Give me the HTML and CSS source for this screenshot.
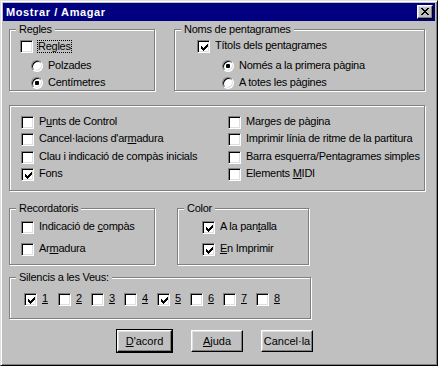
FILE: index.html
```html
<!DOCTYPE html>
<html lang="ca">
<head>
  <meta charset="utf-8">
  <title>Mostrar / Amagar</title>
  <link rel="stylesheet" href="styles.css">
</head>
<body>
<div class="window">
  <div class="titlebar">
    <span class="title">Mostrar / Amagar</span>
    <button class="close" aria-label="Tancar">
      <svg width="8" height="7" viewBox="0 0 8 7"><path d="M0 0h2v1H0zM6 0h2v1H6zM1 1h2v1H1zM5 1h2v1H5zM2 2h4v1H2zM3 3h2v1H3zM2 4h4v1H2zM1 5h2v1H1zM5 5h2v1H5zM0 6h2v1H0zM6 6h2v1H6z"/></svg>
    </button>
  </div>

  <div class="client">
    <div class="row top-row">
      <div class="group regles">
        <span class="legend">Regles</span>
        <div class="opt"><span class="check"></span><span class="text focus">Regles</span></div>
        <div class="radios">
          <div class="opt radio-opt"><span class="radio"></span><span class="text">Polzades</span></div>
          <div class="opt radio-opt"><span class="radio on"></span><span class="text">Centímetres</span></div>
        </div>
      </div>
      <div class="group noms">
        <span class="legend">Noms de pentagrames</span>
        <div class="opt"><span class="check on"><svg width="7" height="7" viewBox="0 0 7 7"><path d="M0 2h1v1h1v1h1v-1h1v-1h1v-1h1v-1h1v3h-1v1h-1v1h-1v1h-1v1h-1v-1h-1v-1h-1z"/></svg></span><span class="text">Títols dels <u>p</u>entagrames</span></div>
        <div class="radios">
          <div class="opt radio-opt"><span class="radio on"></span><span class="text">Només a la primera pàgina</span></div>
          <div class="opt radio-opt"><span class="radio"></span><span class="text">A totes les pàgines</span></div>
        </div>
      </div>
    </div>

    <div class="group mid">
      <div class="col col-left">
        <div class="opt"><span class="check"></span><span class="text">P<u>u</u>nts de Control</span></div>
        <div class="opt"><span class="check"></span><span class="text">Cancel·lacions d'ar<u>m</u>adura</span></div>
        <div class="opt"><span class="check"></span><span class="text">Clau i indicació de compàs inicials</span></div>
        <div class="opt"><span class="check on"><svg width="7" height="7" viewBox="0 0 7 7"><path d="M0 2h1v1h1v1h1v-1h1v-1h1v-1h1v-1h1v3h-1v1h-1v1h-1v1h-1v1h-1v-1h-1v-1h-1z"/></svg></span><span class="text">Fons</span></div>
      </div>
      <div class="col">
        <div class="opt"><span class="check"></span><span class="text">Marges de pàgina</span></div>
        <div class="opt"><span class="check"></span><span class="text">Imprimir línia de ritme de la partitura</span></div>
        <div class="opt"><span class="check"></span><span class="text">Barra esquerra/Pentagrames simples</span></div>
        <div class="opt"><span class="check"></span><span class="text">Elements <u>M</u>IDI</span></div>
      </div>
    </div>

    <div class="row third-row">
      <div class="group record">
        <span class="legend">Recordatoris</span>
        <div class="opt"><span class="check"></span><span class="text">Indicació de <u>c</u>ompàs</span></div>
        <div class="opt"><span class="check"></span><span class="text">Ar<u>m</u>adura</span></div>
      </div>
      <div class="group color">
        <span class="legend">Color</span>
        <div class="opt"><span class="check on"><svg width="7" height="7" viewBox="0 0 7 7"><path d="M0 2h1v1h1v1h1v-1h1v-1h1v-1h1v-1h1v3h-1v1h-1v1h-1v1h-1v1h-1v-1h-1v-1h-1z"/></svg></span><span class="text">A la pan<u>t</u>alla</span></div>
        <div class="opt"><span class="check on"><svg width="7" height="7" viewBox="0 0 7 7"><path d="M0 2h1v1h1v1h1v-1h1v-1h1v-1h1v-1h1v3h-1v1h-1v1h-1v1h-1v1h-1v-1h-1v-1h-1z"/></svg></span><span class="text"><u>E</u>n Imprimir</span></div>
      </div>
    </div>

    <div class="group silencis">
      <span class="legend">Silencis a les Veus:</span>
      <div class="opt voice"><span class="check on"><svg width="7" height="7" viewBox="0 0 7 7"><path d="M0 2h1v1h1v1h1v-1h1v-1h1v-1h1v-1h1v3h-1v1h-1v1h-1v1h-1v1h-1v-1h-1v-1h-1z"/></svg></span><span class="text"><u>1</u></span></div>
      <div class="opt voice"><span class="check"></span><span class="text"><u>2</u></span></div>
      <div class="opt voice"><span class="check"></span><span class="text"><u>3</u></span></div>
      <div class="opt voice"><span class="check"></span><span class="text"><u>4</u></span></div>
      <div class="opt voice"><span class="check on"><svg width="7" height="7" viewBox="0 0 7 7"><path d="M0 2h1v1h1v1h1v-1h1v-1h1v-1h1v-1h1v3h-1v1h-1v1h-1v1h-1v1h-1v-1h-1v-1h-1z"/></svg></span><span class="text"><u>5</u></span></div>
      <div class="opt voice"><span class="check"></span><span class="text"><u>6</u></span></div>
      <div class="opt voice"><span class="check"></span><span class="text"><u>7</u></span></div>
      <div class="opt voice"><span class="check"></span><span class="text"><u>8</u></span></div>
    </div>

    <div class="buttons">
      <button class="btn default"><u>D</u>'acord</button>
      <button class="btn"><u>A</u>juda</button>
      <button class="btn">Cancel·la</button>
    </div>
  </div>
</div>
</body>
</html>
```

FILE: styles.css
```css
* { box-sizing: border-box; }

body {
  margin: 0;
  font-family: "Liberation Sans", Arial, sans-serif;
  font-size: 11px;
  line-height: 13px;
  letter-spacing: -0.25px;
  color: #000;
  background: #c0c0c0;
}

.window {
  width: 438px;
  height: 366px;
  padding: 2px;
  background: #c0c0c0;
  border: 1px solid;
  border-color: #dfdfdf #000 #000 #dfdfdf;
  box-shadow: inset 1px 1px #fff, inset -1px -1px #808080;
}

/* title bar */
.titlebar {
  height: 18px;
  display: flex;
  align-items: center;
  justify-content: space-between;
  padding: 0 2px 0 3px;
  background: #000080;
}
.title {
  color: #fff;
  font-weight: bold;
  letter-spacing: 0.6px;
}
.close {
  width: 16px;
  height: 14px;
  display: flex;
  align-items: flex-start;
  padding: 2px 0 0 3px;
  background: #c0c0c0;
  border: 1px solid;
  border-color: #fff #000 #000 #fff;
  box-shadow: inset -1px -1px #808080, inset 1px 1px #dfdfdf;
}
.close svg { display: block; }

/* dialog body */
.client { padding: 8px 0 0 6px; }
.row { display: flex; }

.group {
  position: relative;
  border: 1px solid #808080;
  box-shadow: inset 1px 1px #fff, 1px 1px #fff;
}
.legend {
  position: absolute;
  top: -7px;
  left: 6px;
  padding: 0 3px;
  background: #c0c0c0;
  white-space: nowrap;
}

.top-row { gap: 19px; height: 62px; }
.regles { width: 146px; padding: 10px 0 0 10px; }
.noms { width: 251px; padding: 10px 0 0 22px; }
.radios {
  display: flex;
  flex-direction: column;
  gap: 5px;
  margin-top: 7px;
}
.regles .radios { margin-left: 11px; }
.noms .radios { margin-left: 25px; }

.mid {
  display: flex;
  width: 416px;
  height: 86px;
  margin-top: 14px;
  padding: 10px 0 0 11px;
}
.col {
  display: flex;
  flex-direction: column;
  gap: 4.3px;
}
.col-left { width: 207px; }

.third-row { gap: 22px; height: 57px; margin-top: 17px; }
.record, .color {
  display: flex;
  flex-direction: column;
  gap: 9px;
  padding-top: 12px;
}
.record { width: 146px; padding-left: 11px; }
.color { width: 132px; padding-left: 24px; }

.silencis {
  display: flex;
  width: 302px;
  height: 42px;
  margin-top: 12px;
  padding: 15px 0 0 14px;
}
.voice { width: 33px; }
.voice:first-of-type { width: 34px; }

/* controls */
.opt {
  display: flex;
  align-items: flex-start;
  height: 13px;
}
.radio-opt { height: 12px; }

.text {
  margin-left: 5px;
  line-height: 11px;
  white-space: nowrap;
}
.focus {
  height: 11px;
  margin-top: 1px;
  outline: 1px dotted #000;
}

.check {
  flex: none;
  width: 13px;
  height: 13px;
  padding: 2px 0 0 2px;
  background: #fff;
  border: 1px solid;
  border-color: #808080 #fff #fff #808080;
  box-shadow: inset 1px 1px #000, inset -1px -1px #dfdfdf;
}
.check svg { display: block; margin: 1px 0 0 1px; }

.radio {
  flex: none;
  position: relative;
  width: 12px;
  height: 12px;
  border-radius: 50%;
  background: #fff;
  border: 1px solid;
  border-color: #808080 #fff #fff #808080;
  box-shadow: inset 1px 1px #000, inset -1px -1px #dfdfdf;
}
.radio.on::after {
  content: "";
  position: absolute;
  left: 3px;
  top: 3px;
  width: 4px;
  height: 4px;
  border-radius: 1px;
  background: #000;
}

/* buttons */
.buttons {
  display: flex;
  align-items: flex-start;
  margin-top: 11px;
  padding-left: 108px;
}
.btn {
  width: 52px;
  height: 22px;
  padding: 0;
  font: inherit;
  color: #000;
  background: #c0c0c0;
  border: 1px solid;
  border-color: #fff #000 #000 #fff;
  box-shadow: inset -1px -1px #808080, inset 1px 1px #dfdfdf;
}
.btn + .btn { margin-left: 18px; }
.default {
  width: 55px;
  outline: 1px solid #000;
}
.default + .btn { margin-left: 19px; }
```
